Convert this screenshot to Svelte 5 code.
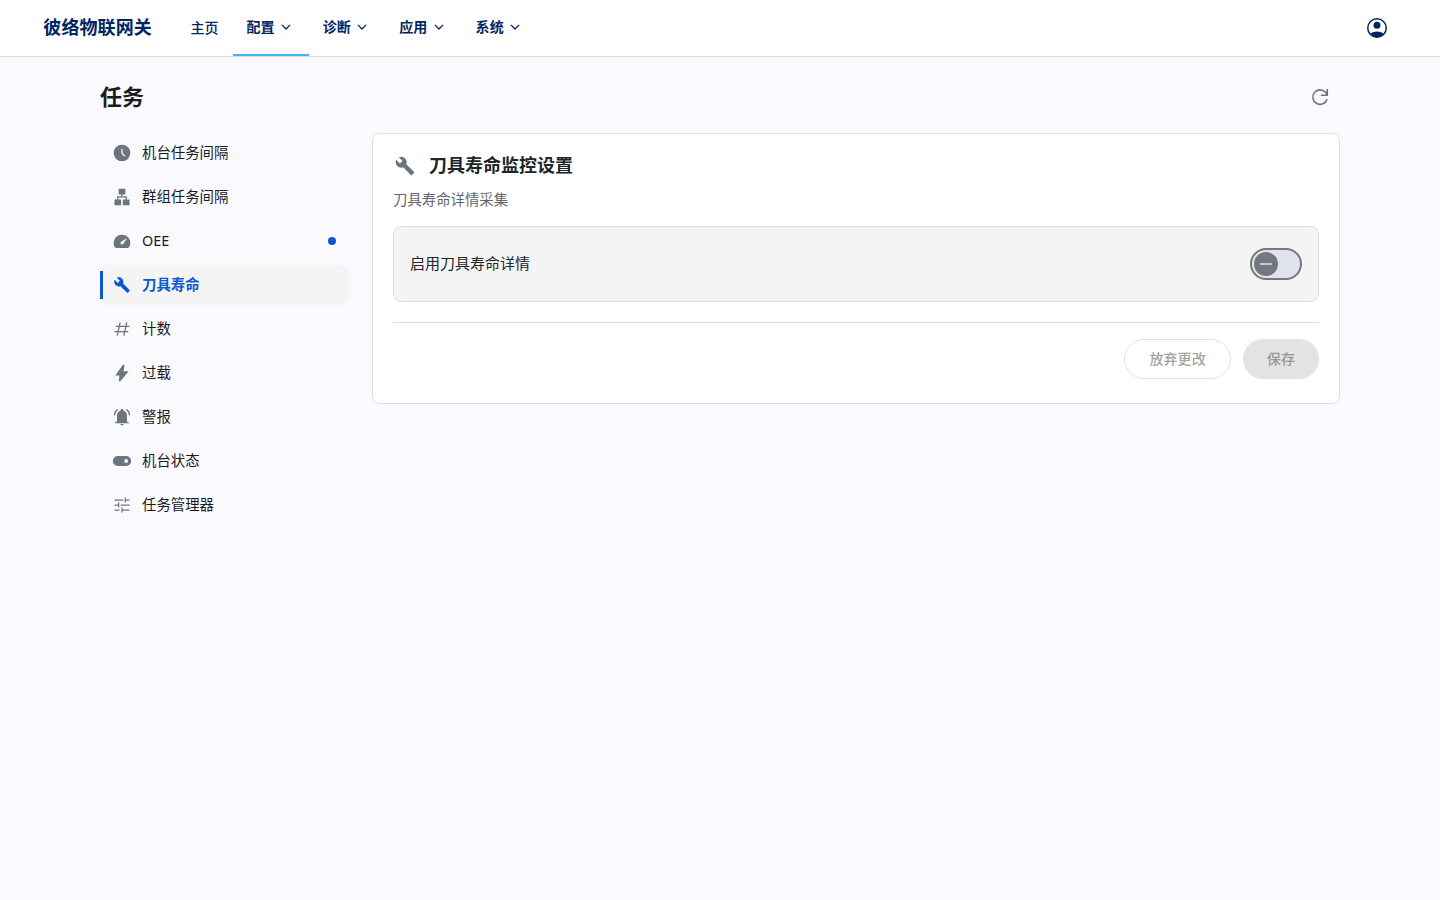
<script>
  const menus = [
    { label: '配置', active: true },
    { label: '诊断' },
    { label: '应用' },
    { label: '系统' },
  ]

  const tasks = [
    { icon: 'clock', label: '机台任务间隔' },
    { icon: 'lan', label: '群组任务间隔' },
    { icon: 'speed', label: 'OEE', dirty: true },
    { icon: 'build', label: '刀具寿命' },
    { icon: 'tag', label: '计数' },
    { icon: 'bolt', label: '过载' },
    { icon: 'bell', label: '警报' },
    { icon: 'toggle', label: '机台状态' },
    { icon: 'tune', label: '任务管理器' },
  ]

  let current = $state('build')
  let enabled = $state(false)
  let saved = $state(false)
  let changed = $derived(enabled !== saved)

  // filled glyphs, 24 unit grid
  const paths = {
    clock: 'M12 2a10 10 0 1 0 0 20 10 10 0 0 0 0-20zm2.900 14.600L11.200 12.400V6.800h1.500v5l3.300 3.700z',
    lan: 'M3 22v-7h3.200v-3.800h5V9H8V2h8v7h-3.300v2.200h5.100V15H21v7h-8v-7h3.300v-2.300H7.700V15H11v7z',
    speed: 'M5.100 20.300a2 2 0 0 1-1.800-1A10 10 0 1 1 20.700 19.300a2 2 0 0 1-1.800 1zM10.700 15.600q.65.65 1.500.550t1.350-.8L18.200 8.300 11 12.800q-.75.45-.85 1.300t.55 1.500z',
    build: 'M22.700 19l-9.100-9.100c.9-2.300.4-5-1.500-6.900-2-2-5-2.400-7.400-1.300L9 6 6 9 1.600 4.700C.4 7.100.9 10.100 2.900 12.100c1.900 1.900 4.600 2.400 6.900 1.500l9.100 9.100c.4.4 1 .4 1.400 0l2.300-2.300c.5-.4.5-1.100.1-1.400z',
    bolt: 'M8 22l1-7H4l9-13h2l-1 8h6L10 22z',
    bell: 'M4 19.500v-1.700h2V10q0-2.075 1.250-3.687T10.500 4.200v-.7q0-.625.438-1.062T12 2t1.063.438T13.500 3.500v.7q2 .5 3.250 2.113T18 10v7.800h2v1.700zm8 2.700q-.825 0-1.300-.5T10.200 20.500h3.600q0 .7-.5 1.200T12 22.200M2.200 10q0-2.500 1.113-4.587T6.300 2.400l1 1.150q-1.500 1.100-2.500 2.775T3.800 10zm18 0q0-2-1-3.675T16.700 3.550l1-1.150q1.875 1 2.988 3.013T21.800 10z',
    toggle: 'M7 18a6 6 0 0 1 0-12h10a6 6 0 0 1 0 12zm10-3.700a2.300 2.300 0 1 0 0-4.600 2.300 2.300 0 0 0 0 4.600z',
  }

  // outlined glyphs
  const strokes = {
    tag: 'M4.500 8.800h16.500M3 15.200h16.500M9.800 4L6.200 20M17.800 4l-3.600 16',
    tune: 'M3 6h10.500M16.500 6H21M16 3v6M3 12h4.500M10.500 12H21M8 9v6M3 18h6M12 18h9M12 15v6',
  }
</script>

{#snippet icon(name, size)}
  <svg width={size} height={size} viewBox={name === 'build' ? '-2.200 -2.200 28.400 28.400' : '0 0 24 24'} aria-hidden="true">
    {#if paths[name]}
      <path d={paths[name]} fill="currentColor" fill-rule="evenodd" />
    {:else}
      <path d={strokes[name]} fill="none" stroke="currentColor" stroke-width="1.5" />
    {/if}
  </svg>
{/snippet}

<header>
  <div class="brand">彼络物联网关</div>
  <nav>
    <a class="home" href="#home">主页</a>
    {#each menus as m}
      <button class="menu" class:active={m.active}>
        {m.label}
        <svg width="16" height="16" viewBox="0 0 16 16"><path d="M3.900 5.900L8 10l4.100-4.100" fill="none" stroke="currentColor" stroke-width="1.3" /></svg>
      </button>
    {/each}
  </nav>
  <button class="account" aria-label="account">
    <svg width="24" height="24" viewBox="0 0 24 24">
      <circle cx="12" cy="12" r="9.250" fill="none" stroke="currentColor" stroke-width="1.5" />
      <circle cx="12" cy="9.300" r="3.500" fill="currentColor" />
      <path d="M5.300 17.600Q8.200 15.400 12 15.400t6.700 2.200Q16 21.300 12 21.300T5.300 17.600z" fill="currentColor" />
    </svg>
  </button>
</header>

<main>
  <div class="page-head">
    <h1>任务</h1>
    <button class="refresh" aria-label="refresh">
      <svg width="24" height="24" viewBox="0 0 24 24" fill="none" stroke="currentColor" stroke-width="1.600">
        <path d="M19 14.200A7.250 7.250 0 1 1 17.500 7.300L19.200 9.500M19.250 4v6.250H13" />
      </svg>
    </button>
  </div>

  <div class="columns">
    <aside>
      {#each tasks as t}
        <button class="task" class:selected={current === t.icon} onclick={() => (current = t.icon)}>
          {@render icon(t.icon, 20)}
          <span>{t.label}</span>
          {#if t.dirty}<i class="dot"></i>{/if}
        </button>
      {/each}
    </aside>

    <section class="card">
      <div class="card-title">
        {@render icon('build', 24)}
        <h2>刀具寿命监控设置</h2>
      </div>
      <p class="desc">刀具寿命详情采集</p>
      <div class="setting">
        <span>启用刀具寿命详情</span>
        <button class="switch" class:on={enabled} role="switch" aria-checked={enabled} aria-label="启用刀具寿命详情" onclick={() => (enabled = !enabled)}>
          <span class="handle"></span>
        </button>
      </div>
      <div class="actions">
        <button class="btn outlined" disabled={!changed} onclick={() => (enabled = saved)}>放弃更改</button>
        <button class="btn filled" disabled={!changed} onclick={() => (saved = enabled)}>保存</button>
      </div>
    </section>
  </div>
</main>

<style>
  :global(body) { background:#faf9fe; color:#1a1b1f; font-family:Roboto, "Noto Sans CJK SC", sans-serif; }
  * { box-sizing:border-box; }
  button { border:0; background:none; padding:0; font:inherit; color:inherit; cursor:pointer; }
  svg { display:block; flex:none; }
  h1, h2, p { margin:0; }

  header { height:57px; display:flex; align-items:center; padding:0 51px 0 43.300px; background:#fff; border-bottom:1px solid #dedede; color:#002661; }
  .brand { width:133.300px; font-size:18px; line-height:24px; font-weight:600; letter-spacing:.1px; }
  nav { height:56px; display:flex; }
  .home { display:flex; align-items:center; width:56.200px; padding-left:14px; color:inherit; font-size:14px; line-height:20px; font-weight:500; text-decoration:none; }
  .menu { display:flex; align-items:center; gap:3.400px; width:76.400px; padding:0 0 0 13.600px; border-bottom:2px solid transparent; font-size:14px; line-height:20px; font-weight:600; letter-spacing:.1px; }
  .menu.active { border-color:#3cb9ef; font-weight:700; }
  .account { margin-left:auto; }

  main { width:1240px; margin:0 auto; }
  .page-head { height:76px; padding:4px 8px 0 0; display:flex; align-items:center; justify-content:space-between; }
  h1 { padding-top:2px; font-size:22px; line-height:32px; font-weight:600; }
  .refresh { color:#6c757d; }
  .columns { display:flex; align-items:flex-start; gap:24px; }

  aside { width:248px; display:flex; flex-direction:column; gap:4px; }
  .task { position:relative; height:40px; display:flex; align-items:center; gap:10px; padding:0 12px; border-radius:8px; font-size:14.400px; text-align:left; }
  .task span { padding-bottom:1px; font-family:"Noto Sans", "Noto Sans CJK SC", sans-serif; line-height:20px; }
  .task svg { color:#6c757d; }
  .task.selected { background:#f4f4f4; color:#0b57d0; font-weight:600; }
  .task.selected svg { color:inherit; }
  .task.selected::before { content:''; position:absolute; left:0; top:6px; bottom:6px; width:3px; background:#0b57d0; }
  .dot { width:8px; height:8px; margin-left:auto; border-radius:50%; background:#0b57d0; }

  .card { flex:1; padding:20px 20px 24px; background:#fff; border:1px solid #dedede; border-radius:8px; }
  .card-title { height:24px; display:flex; align-items:center; gap:12px; color:#6c757d; }
  h2 { font-size:18px; line-height:24px; font-weight:600; color:#212529; }
  .desc { margin:12px 0 14px; font-size:14.400px; line-height:22px; color:#5f666d; }
  .setting { height:76px; display:flex; align-items:center; justify-content:space-between; padding:0 16px; background:#f4f4f4; border:1px solid #dedede; border-radius:8px; font-size:15px; line-height:22px; color:#212529; }
  .switch { width:52px; height:32px; display:flex; align-items:center; padding:0 2px; border:2px solid #74777f; border-radius:16px; background:#e0e2ec; }
  .handle { width:24px; height:24px; display:flex; align-items:center; justify-content:center; border-radius:50%; background:#74777f; }
  .handle::after { content:''; width:12px; height:2px; background:#c5c7d0; }
  .switch.on { justify-content:flex-end; background:#0b57d0; border-color:#0b57d0; }
  .switch.on .handle { background:#fff; }

  .actions { display:flex; justify-content:flex-end; gap:12px; margin-top:20px; padding-top:16px; border-top:1px solid #dedede; }
  .btn { height:40px; padding:0 24px; border-radius:20px; font-size:14px; line-height:20px; font-weight:500; letter-spacing:.1px; color:#0b57d0; }
  .outlined { border:1px solid #74777f; }
  .filled { background:#0b57d0; color:#fff; }
  .btn:disabled { color:#a3a3a3; cursor:default; }
  .outlined:disabled { border-color:#e2e2e2; }
  .filled:disabled { background:#e3e3e3; color:#979797; }
</style>
